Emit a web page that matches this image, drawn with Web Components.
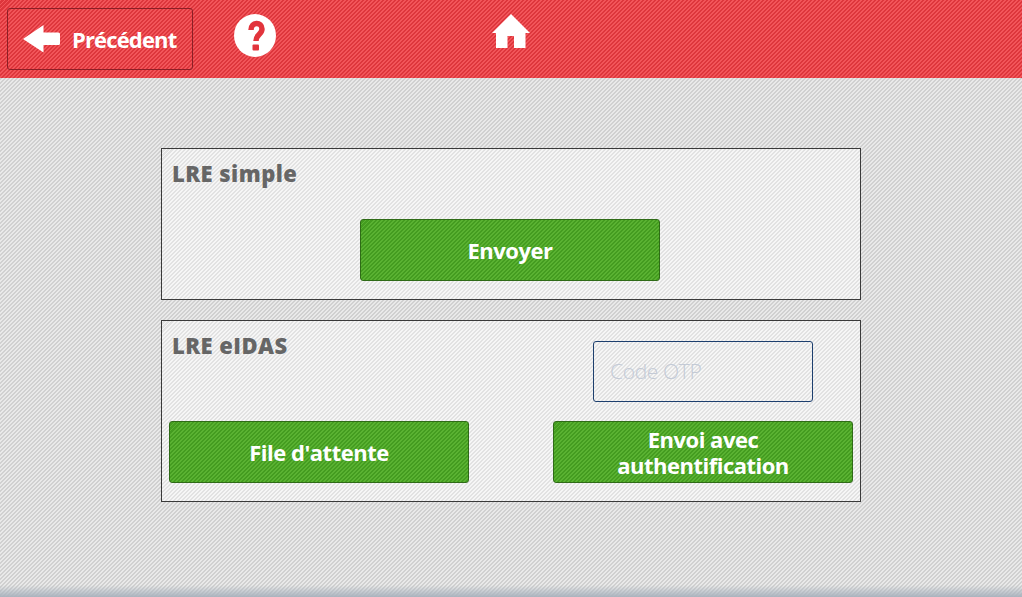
<!doctype html>
<html lang="fr"><head><meta charset="utf-8"><title>LRE</title>
<style>
html,body{margin:0;height:100%}
body{width:1022px;height:597px;overflow:hidden;font-family:"Open Sans","Noto Sans",sans-serif;display:flex;flex-direction:column;
background:linear-gradient(to bottom,transparent 585px,#aab3be 597px),repeating-linear-gradient(135deg,#e9e9e9 0 1.41px,#d0d0d0 1.41px 2.83px)}
</style></head><body>
<template id="t-btn"><style>
:host{display:flex;align-items:center;justify-content:center;box-sizing:border-box;width:300px;height:62px;border:1px solid #2f6b17;border-radius:3px;
background:repeating-linear-gradient(135deg,#5ab232 0 1.41px,#449c20 1.41px 2.83px);color:#fff;font:700 22px/26px "Open Sans",sans-serif;text-align:center;letter-spacing:-.5px}
</style><slot></slot></template>
<template id="t-back"><style>
:host{display:flex;align-items:center;box-sizing:border-box;width:186px;height:62px;border:1px solid #8c1f26;border-radius:3px;padding-left:15px;gap:12px;color:#fff;font:700 22px/26px "Open Sans",sans-serif;letter-spacing:-.85px}
svg{display:block;width:37px;height:28px}
</style><svg viewBox="0 0 37 28"><path fill="#fff" d="M0 14 20.500 0V7.500H35.500a1.500 1.500 0 0 1 1.500 1.500v9.500a1.500 1.500 0 0 1-1.500 1.500H20.500v7.500Z"/></svg><slot></slot></template>
<template id="t-header"><style>
:host{display:flex;align-items:flex-start;flex:none;box-sizing:border-box;height:78px;padding:8px 0 0 7px;background:repeating-linear-gradient(135deg,#f2555a 0 1.41px,#dd363c 1.41px 2.83px)}
.help{display:block;margin:6px 0 0 41px;width:42px;height:43px;flex:none}
.home{display:block;margin:6px 0 0 216px;width:38px;height:34px;flex:none}
</style><slot></slot>
<svg class="help" viewBox="0 0 42 43"><ellipse cx="21" cy="21.500" rx="21" ry="21.500" fill="#fff"/><path fill="none" stroke="#e2343c" stroke-width="5.500" d="M17 16c0-8.500 11-8.500 11-1 0 5.500-6 5-6 12"/><rect x="18.500" y="30.500" width="6.500" height="6" rx="1" fill="#e2343c"/></svg>
<svg class="home" viewBox="0 0 38 34"><path fill="#fff" d="M19 0 38 19H33.500V34H22V22H15.500V34H4V19H0Z"/></svg></template>
<template id="t-panel"><style>
:host{display:grid;grid-template-columns:300px 300px;justify-content:space-between;box-sizing:border-box;width:700px;padding:7px;border:1px solid #3a3a3a;
background:repeating-linear-gradient(135deg,#f6f6f6 0 1.41px,#e2e2e2 1.41px 2.83px)}
</style><slot></slot></template>
<template id="t-title"><style>
:host{display:block;margin:4px 0 0 3px;color:#666;font:800 22px/26px "Open Sans",sans-serif;letter-spacing:.45px}
</style><slot></slot></template>
<template id="t-input"><style>
:host{display:block;box-sizing:border-box;width:220px;height:61px;justify-self:center;margin-top:13px;border:1px solid #1d3f6e;border-radius:3px;padding-left:16px;color:#c3cad6;font:300 21px/59px "Open Sans",sans-serif;letter-spacing:-.35px}
</style><slot></slot></template>
<template id="t-main"><style>
:host{display:flex;flex-direction:column;align-items:center;gap:20px;padding-top:70px}
</style><slot></slot></template>
<script>
for(const [n,t] of [['lre-btn','t-btn'],['lre-back','t-back'],['lre-header','t-header'],['lre-panel','t-panel'],['lre-title','t-title'],['lre-input','t-input'],['lre-main','t-main']]){
customElements.define(n,class extends HTMLElement{constructor(){super();this.attachShadow({mode:'open'}).append(document.getElementById(t).content.cloneNode(true))}})}
</script>
<lre-header><lre-back>Précédent</lre-back></lre-header>
<lre-main>
<lre-panel style="height:152px;grid-template-rows:56px 62px;row-gap:7px">
<lre-title style="grid-column:1/3">LRE simple</lre-title>
<lre-btn style="grid-column:1/3;justify-self:center;margin-right:2px">Envoyer</lre-btn>
</lre-panel>
<lre-panel style="height:182px;grid-template-rows:74px 62px;row-gap:19px">
<lre-title>LRE eIDAS</lre-title>
<lre-input>Code OTP</lre-input>
<lre-btn>File d'attente</lre-btn>
<lre-btn>Envoi avec<br>authentification</lre-btn>
</lre-panel>
</lre-main>
</body></html>
